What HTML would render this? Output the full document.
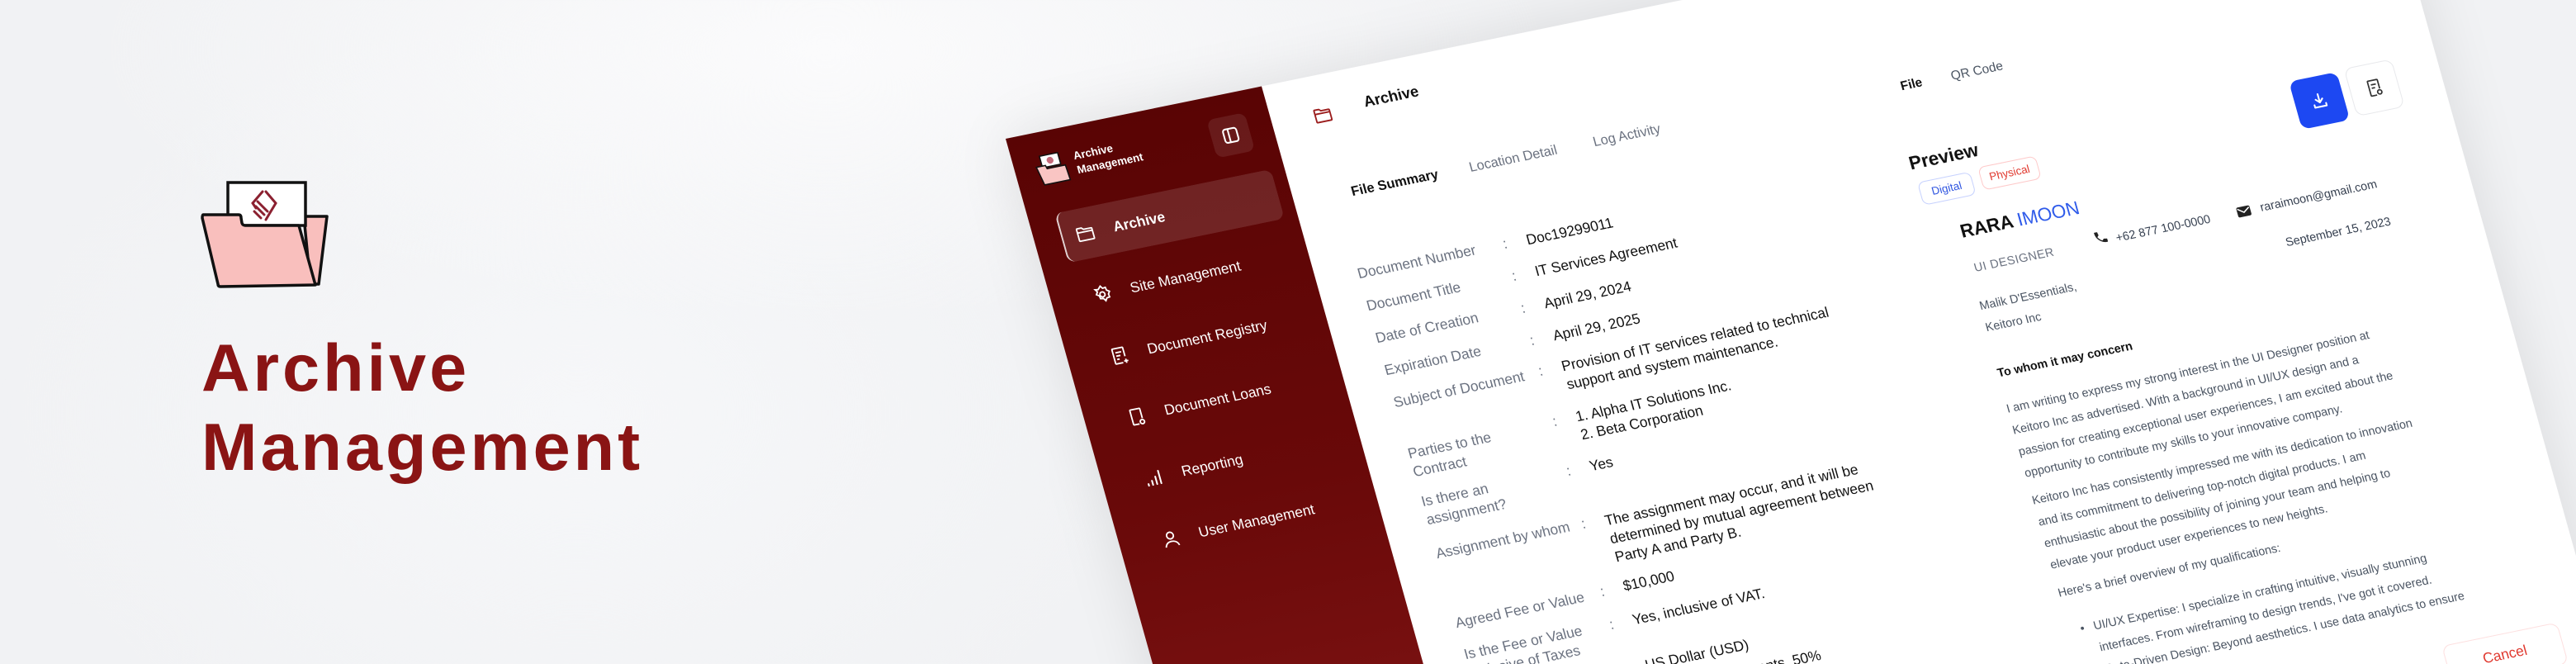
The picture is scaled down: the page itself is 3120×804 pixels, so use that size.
<!DOCTYPE html>
<html><head><meta charset="utf-8">
<style>
*{margin:0;padding:0;box-sizing:border-box}
html,body{width:3120px;height:804px;overflow:hidden}
body{position:relative;font-family:"Liberation Sans",sans-serif;
background:
radial-gradient(ellipse 900px 330px at 1000px 60px,#fbfbfc 0%,rgba(251,251,252,0) 100%),
radial-gradient(ellipse 700px 500px at 700px 500px,#f6f7f9 0%,rgba(246,247,249,0) 100%),
#f1f2f4;}
.title{position:absolute;left:244px;top:398px;font-size:81px;font-weight:700;color:#8a1414;line-height:96px;letter-spacing:4px}
.plane{position:absolute;left:0;top:0;width:1665px;height:1150px;background:#fff;transform-origin:0 0;transform:matrix(1,-0.205,0.28,1,1218,168);box-shadow:0 0 70px rgba(0,0,0,0.10)}
.side{position:absolute;left:0;top:0;width:310px;height:1150px;background:linear-gradient(180deg,#590404 0%,#690909 40%,#7e1313 70%,#8a1a1a 100%)}
.a{position:absolute;white-space:nowrap}
.si{position:absolute;left:0;width:310px;height:56px}
.si .t{position:absolute;left:95px;top:17px;font-size:17px;color:#fff;line-height:22px}
.si svg{position:absolute;left:49px;top:16px}
.lab{position:absolute;left:360px;font-size:17px;line-height:22px;color:#6b7280;white-space:nowrap}
.col{position:absolute;left:536px;font-size:17px;line-height:22px;color:#6b7280}
.val{position:absolute;left:564px;font-size:17px;line-height:22px;color:#111;white-space:nowrap}
.p{position:absolute;left:1060px;font-size:14px;line-height:26px;color:#4b5563;white-space:nowrap}
</style></head><body>

<svg style="position:absolute;left:236px;top:214px" width="170" height="140" viewBox="236 214 170 140">
 <polygon points="368,262 396,262 386,344 376,344" fill="#f9bfbd" stroke="#111" stroke-width="3.5" stroke-linejoin="round"/>
 <rect x="276" y="221" width="94" height="52" fill="#fff" stroke="#111" stroke-width="3.5"/>
 <g stroke="#8b2030" stroke-width="3" fill="none" stroke-linecap="round">
  <path d="M318 232 L306 246 L310 252"/><path d="M322 232 L334 246 L322 266"/>
  <path d="M312 244 L324 256"/><path d="M310 250 L320 260"/><path d="M308 256 L316 264"/>
 </g>
 <path d="M246 260 L289 260 Q292 260 292 264 L293 270 Q294 273 297 273 L362 273 L382 345 L267 347 Q264 347 264 344 L245 264 Q245 260 246 260 Z" fill="#f9bfbd" stroke="#111" stroke-width="3.5" stroke-linejoin="round"/>
</svg>
<div class="title">Archive<br>Management</div>

<div class="plane">
 <div class="side">
  <svg class="a" style="left:24px;top:26px" width="42" height="38" viewBox="0 0 42 38">
   <rect x="9" y="2" width="22" height="14" fill="#fff" stroke="#111" stroke-width="1.5"/>
   <circle cx="20" cy="9" r="4" fill="#c46a7a"/>
   <path d="M2 14 L13 14 L14 18 L36 18 L37 36 L6 36 Z" fill="#f9c5c3" stroke="#111" stroke-width="1.5"/>
  </svg>
  <div class="a" style="left:72px;top:27px;font-size:13px;line-height:17px;color:#fff;font-weight:700">Archive<br>Management</div>
  <div class="a" style="left:236px;top:26px;width:46px;height:46px;border-radius:9px;background:rgba(255,255,255,0.09)"></div>
  <svg class="a" style="left:249px;top:39px" width="20" height="20" viewBox="0 0 20 20"><rect x="2" y="2" width="16" height="16" rx="3" fill="none" stroke="#fff" stroke-width="2"/><line x1="8" y1="2" x2="8" y2="18" stroke="#fff" stroke-width="2"/></svg>
  <div class="a" style="left:32px;top:97px;width:262px;height:60px;border-radius:10px;background:rgba(255,255,255,0.12);border-left:2px solid rgba(255,255,255,0.8)"></div>
  <div class="si" style="top:99px"><svg width="24" height="24" viewBox="0 0 24 24" fill="none" stroke="#fff" stroke-width="1.8"><path d="M3 6a1 1 0 0 1 1-1h5l2 2h9a1 1 0 0 1 1 1v11a1 1 0 0 1-1 1H4a1 1 0 0 1-1-1z"/><path d="M3 10h18"/></svg><div class="t" style="font-weight:700">Archive</div></div>
  <div class="si" style="top:173px"><svg width="24" height="24" viewBox="0 0 24 24" fill="none" stroke="#fff" stroke-width="1.8"><circle cx="12" cy="12" r="3"/><path d="M12 2l2 3 3.5-.5.5 3.5 3 2-2 3 .5 3.5-3.5.5-2 3-2-3-3.5-.5-.5-3.5-3-2 2-3L5 5l3.5.5z"/></svg><div class="t">Site Management</div></div>
  <div class="si" style="top:247px"><svg width="24" height="24" viewBox="0 0 24 24" fill="none" stroke="#fff" stroke-width="1.8"><path d="M14 21H6a1 1 0 0 1-1-1V4a1 1 0 0 1 1-1h11a1 1 0 0 1 1 1v10"/><path d="M8 8h7M8 12h5M8 16h3M18 17v5M15.5 19.5h5"/></svg><div class="t">Document Registry</div></div>
  <div class="si" style="top:321px"><svg width="24" height="24" viewBox="0 0 24 24" fill="none" stroke="#fff" stroke-width="1.8"><path d="M13 21H7a1 1 0 0 1-1-1V4a1 1 0 0 1 1-1h10a1 1 0 0 1 1 1v11"/><circle cx="17" cy="19" r="2.5"/></svg><div class="t">Document Loans</div></div>
  <div class="si" style="top:395px"><svg width="24" height="24" viewBox="0 0 24 24" fill="none" stroke="#fff" stroke-width="2" stroke-linecap="round"><path d="M4 20v-2M9 20v-5M14 20v-9M19 20V5"/></svg><div class="t">Reporting</div></div>
  <div class="si" style="top:469px"><svg width="24" height="24" viewBox="0 0 24 24" fill="none" stroke="#fff" stroke-width="1.8"><circle cx="12" cy="8" r="4"/><path d="M4 21c1-4 4-6 8-6s7 2 8 6"/></svg><div class="t">User Management</div></div>
 </div>

 <svg class="a" style="left:359px;top:35px" width="24" height="24" viewBox="0 0 24 24" fill="none" stroke="#9b1c1c" stroke-width="1.8"><path d="M3 6a1 1 0 0 1 1-1h5l2 2h9a1 1 0 0 1 1 1v11a1 1 0 0 1-1 1H4a1 1 0 0 1-1-1z"/><path d="M3 10h18"/></svg>
 <div class="a" style="left:422px;top:31px;font-size:18px;line-height:22px;font-weight:700;color:#111">Archive</div>
 <div class="a" style="left:379px;top:134px;font-size:16px;font-weight:700;color:#111">File Summary</div>
 <div class="a" style="left:522px;top:134px;font-size:16px;color:#6b7280">Location Detail</div>
 <div class="a" style="left:672px;top:134px;font-size:16px;color:#6b7280">Log Activity</div>

 <div class="lab" style="top:227px">Document Number</div><div class="col" style="top:227px">:</div><div class="val" style="top:228px">Doc19299011</div>
 <div class="lab" style="top:266px">Document Title</div><div class="col" style="top:266px">:</div><div class="val" style="top:266px">IT Services Agreement</div>
 <div class="lab" style="top:305px">Date of Creation</div><div class="col" style="top:305px">:</div><div class="val" style="top:305px">April 29, 2024</div>
 <div class="lab" style="top:344px">Expiration Date</div><div class="col" style="top:344px">:</div><div class="val" style="top:344px">April 29, 2025</div>
 <div class="lab" style="top:383px">Subject of Document</div><div class="col" style="top:381px">:</div><div class="val" style="top:381px">Provision of IT services related to technical<br>support and system maintenance.</div>
 <div class="lab" style="top:445px">Parties to the<br>Contract</div><div class="col" style="top:442px">:</div><div class="val" style="top:442px">1. Alpha IT Solutions Inc.<br>2. Beta Corporation</div>
 <div class="lab" style="top:503px">Is there an<br>assignment?</div><div class="col" style="top:502px">:</div><div class="val" style="top:502px">Yes</div>
 <div class="lab" style="top:566px">Assignment by whom</div><div class="col" style="top:566px">:</div><div class="val" style="top:568px">The assignment may occur, and it will be<br>determined by mutual agreement between<br>Party A and Party B.</div>
 <div class="lab" style="top:650px">Agreed Fee or Value</div><div class="col" style="top:648px">:</div><div class="val" style="top:647px">$10,000</div>
 <div class="lab" style="top:688px">Is the Fee or Value<br>Inclusive of Taxes</div><div class="col" style="top:688px">:</div><div class="val" style="top:688px">Yes, inclusive of VAT.</div>
 <div class="lab" style="top:743px">Currency</div><div class="col" style="top:743px">:</div><div class="val" style="top:743px">US Dollar (USD)</div>
 <div class="lab" style="top:772px">Payment Terms</div><div class="col" style="top:772px">:</div><div class="val" style="top:772px">Paid in 2 installments, 50%<br>upfront, 50% upon completion</div>

 <div class="a" style="left:1042px;top:142px;font-size:15px;font-weight:700;color:#111">File</div>
 <div class="a" style="left:1103px;top:142px;font-size:15px;color:#4b5563">QR Code</div>
 <div class="a" style="left:1488px;top:236px;width:58px;height:58px;border-radius:10px;background:#1d48f2"></div>
 <svg class="a" style="left:1505px;top:253px" width="24" height="24" viewBox="0 0 24 24" fill="none" stroke="#fff" stroke-width="2" stroke-linecap="round" stroke-linejoin="round"><path d="M12 4v10M8 10l4 4 4-4M5 16v3h14v-3"/></svg>
 <div class="a" style="left:1555px;top:234px;width:58px;height:58px;border-radius:10px;border:1px solid #e8e9ec;background:#fff"></div>
 <svg class="a" style="left:1572px;top:251px" width="24" height="24" viewBox="0 0 24 24" fill="none" stroke="#333" stroke-width="1.7"><path d="M13 21H7a1 1 0 0 1-1-1V4a1 1 0 0 1 1-1h10a1 1 0 0 1 1 1v10"/><path d="M9 8h6M9 12h4"/><circle cx="17" cy="18" r="2.5"/></svg>

 <div class="a" style="left:1027px;top:228px;font-size:22px;font-weight:700;color:#111">Preview</div>
 <div class="a" style="left:1030px;top:264px;width:64px;height:28px;border:1px solid #c7d2fe;border-radius:8px;font-size:13px;color:#2f55e0;text-align:center;line-height:26px">Digital</div>
 <div class="a" style="left:1104px;top:261px;width:70px;height:28px;border:1px solid #fecaca;border-radius:8px;font-size:13px;color:#e0382e;text-align:center;line-height:26px">Physical</div>

 <div class="a" style="left:1064px;top:318px;font-size:22px;font-weight:700;color:#111">RARA <span style="color:#2f5bea;font-weight:400">IMOON</span></div>
 <div class="a" style="left:1068px;top:367px;font-size:14px;color:#6b7280;letter-spacing:.5px">UI DESIGNER</div>
 <svg class="a" style="left:1214px;top:361px" width="18" height="18" viewBox="0 0 24 24"><path d="M6.6 10.8a15 15 0 0 0 6.6 6.6l2.2-2.2a1 1 0 0 1 1-.25 11 11 0 0 0 3.6.6 1 1 0 0 1 1 1V20a1 1 0 0 1-1 1A17 17 0 0 1 3 4a1 1 0 0 1 1-1h3.5a1 1 0 0 1 1 1c0 1.25.2 2.45.6 3.6a1 1 0 0 1-.25 1z" fill="#222"/></svg>
 <div class="a" style="left:1240px;top:366px;font-size:14px;color:#374151">+62 877 100-0000</div>
 <svg class="a" style="left:1386px;top:367px" width="18" height="14" viewBox="0 0 18 14"><rect x="1" y="1" width="16" height="12" rx="2" fill="#222"/><path d="M2 3l7 5 7-5" stroke="#fff" stroke-width="1.5" fill="none"/></svg>
 <div class="a" style="left:1415px;top:365px;font-size:14px;color:#374151">raraimoon@gmail.com</div>
 <div class="a" style="left:1433px;top:411px;font-size:14px;color:#374151">September 15, 2023</div>
 <div class="a" style="left:1062px;top:407px;font-size:14px;line-height:26px;color:#4b5563">Malik D'Essentials,<br>Keitoro Inc</div>
 <div class="a" style="left:1061px;top:493px;font-size:14px;font-weight:700;color:#111">To whom it may concern</div>
 <div class="p" style="top:531px">I am writing to express my strong interest in the UI Designer position at<br>Keitoro Inc as advertised. With a background in UI/UX design and a<br>passion for creating exceptional user experiences, I am excited about the<br>opportunity to contribute my skills to your innovative company.</div>
 <div class="p" style="top:642px">Keitoro Inc has consistently impressed me with its dedication to innovation<br>and its commitment to delivering top-notch digital products. I am<br>enthusiastic about the possibility of joining your team and helping to<br>elevate your product user experiences to new heights.</div>
 <div class="p" style="top:754px">Here's a brief overview of my qualifications:</div>
 <div class="p" style="top:800px;left:1074px">•</div>
 <div class="p" style="top:800px;left:1090px">UI/UX Expertise: I specialize in crafting intuitive, visually stunning<br>interfaces. From wireframing to design trends, I've got it covered.<br>Data-Driven Design: Beyond aesthetics. I use data analytics to ensure</div>
 <div class="a" style="left:1482px;top:918px;width:140px;height:50px;border:1px solid #fde0e0;border-radius:10px;color:#e0382e;font-size:17px;line-height:48px;text-align:center">Cancel</div>
</div>
</body></html>
